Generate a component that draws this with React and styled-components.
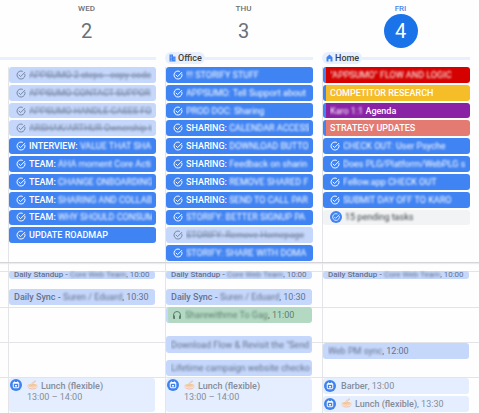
import React from "react";
import styled, { createGlobalStyle } from "styled-components";

const GlobalStyle = createGlobalStyle`
  * {
    box-sizing: border-box;
  }
  body {
    margin: 0;
    background: #fefefe;
    font-family: Roboto, "Liberation Sans", sans-serif;
    overflow-x: hidden;
  }
  button {
    font-family: inherit;
    border: none;
    margin: 0;
    cursor: pointer;
  }
`;

const HEADER = styled.header`
  display: grid;
  grid-template-columns: 8px repeat(3, minmax(0, 1fr));
  height: 52px;
`;

const DAYHEAD = styled.div`
  grid-column: ${(p) => p.$col};
  display: flex;
  flex-direction: column;
  align-items: center;
  padding-top: 3px;
`;

const DAYNAME = styled.span`
  font-size: 8px;
  line-height: 11px;
  font-weight: 500;
  color: ${(p) => (p.$today ? "#4a86e8" : "#6c7075")};
`;

const DAYNUMBER = styled.button`
  width: 34px;
  height: 34px;
  padding: 0;
  border-radius: 50%;
  font-size: 20px;
  line-height: 34px;
  background: ${(p) => (p.$today ? "#1a73e8" : "transparent")};
  color: ${(p) => (p.$today ? "#fff" : "#6c7075")};
`;

const PLACES = styled.div`
  display: grid;
  grid-template-columns: 8px repeat(3, minmax(0, 1fr));
  height: 12px;
  align-items: center;
`;

const PLACE = styled.div`
  grid-column: ${(p) => p.$span};
  display: flex;
  align-items: center;
  padding-right: 9px;
`;

const PLACELABEL = styled.button`
  display: flex;
  align-items: center;
  gap: 2px;
  height: 12px;
  padding: 0 3px 0 4px;
  border-radius: 6px;
  background: #e8f0fe;
  color: #3c4043;
  font-size: 9px;
  line-height: 12px;
  font-weight: 500;
`;

const PLACELINE = styled.div`
  flex: 1;
  height: 3px;
  background: #e8f0fe;
`;

const ALLDAY = styled.div`
  display: grid;
  grid-template-columns: 8px repeat(3, minmax(0, 1fr));
  padding-top: 3px;
  height: 199px;
  border-bottom: 1px solid #d4d5d8;
  box-shadow: 0 1px 1px #ececee;
`;

const TASKS = styled.div`
  grid-column: ${(p) => p.$col};
  display: grid;
  grid-template-rows: repeat(11, 1fr);
  gap: 2px;
  padding: 0 9px 1px 0;
  border-left: 1px solid #e4e5e8;
`;

const kinds = {
  task: ["#4083f2", "#fff"],
  done: ["#c5d7fb", "#75849f"],
  pending: ["#f1f3f4", "#3c4043"],
  red: ["#d50000", "#fff"],
  yellow: ["#f5bd27", "#fff"],
  purple: ["#8a22a6", "#fff"],
  pink: ["#e47b73", "#fff"],
};

const TASK = styled.button`
  display: flex;
  align-items: center;
  gap: 3px;
  min-width: 0;
  padding: 0 4px 0 ${(p) => (p.$bar ? 4 : 7)}px;
  border-radius: 3px;
  background: ${(p) => kinds[p.$kind][0]};
  color: ${(p) => kinds[p.$kind][1]};
  font-size: 9px;
  line-height: 14px;
  font-weight: 500;
  text-align: left;
  && {
    border-left: ${(p) => (p.$bar ? "3px solid #4083f2" : "none")};
  }
`;

const LABEL = styled.span`
  flex: 1;
  min-width: 0;
  overflow: ${(p) => (p.$open ? "visible" : "hidden")};
  white-space: nowrap;
  text-decoration: ${(p) => (p.$strike ? "line-through" : "none")};
`;

const HIDDEN = styled.span`
  display: inline-block;
  font-weight: 400;
  filter: blur(1px);
  text-decoration: inherit;
`;

const HOURS = styled.main`
  display: grid;
  grid-template-columns: 8px repeat(3, minmax(0, 1fr));
  grid-template-rows: repeat(150, 1px);
`;

const HOURLINE = styled.div`
  grid-column: 1 / -1;
  grid-row: ${(p) => p.$at};
  background: #e3e4e7;
`;

const DAYLINE = styled.div`
  grid-column: ${(p) => p.$col};
  grid-row: 1 / -1;
  border-left: 1px solid #e4e5e8;
`;

const tones = {
  blue: { fill: "#c5d7fb", ink: "#65728d", left: 5 },
  green: { fill: "#b3d9c3", ink: "#5f7f6e", left: 4 },
  pale: { fill: "#e4eefe", ink: "#868c99", left: 1 },
};

const EVENT = styled.button`
  grid-column: ${(p) => p.$col};
  grid-row: ${(p) => p.$start} / span ${(p) => p.$size};
  display: flex;
  align-items: ${(p) => (p.$tall ? "flex-start" : "center")};
  gap: ${(p) => (p.$tone === "pale" ? 5 : 3)}px;
  min-width: 0;
  padding: ${(p) => (p.$tall ? 1 : 0)}px 0 0 ${(p) => tones[p.$tone].left}px;
  border-radius: 3px;
  background: ${(p) => tones[p.$tone].fill};
  color: ${(p) => tones[p.$tone].ink};
  font-size: ${(p) => (p.$size < 10 ? 8 : 9)}px;
  line-height: ${(p) => (p.$size < 10 ? 8 : 14)}px;
  font-weight: 500;
  text-align: left;
  && {
    margin: 0 10px 0 1px;
    border-left: ${(p) => (p.$tone === "green" ? "2px solid #c5d7fb" : "none")};
  }
`;

const TIME = styled.span`
  font-weight: 400;
`;

const TIMELINE = styled.div`
  font-weight: 400;
  line-height: 9px;
`;

function CheckIcon({ badge }) {
  return (
    <svg
      width={badge ? 12 : 10}
      height={badge ? 12 : 10}
      viewBox="0 0 20 20"
      fill="none"
      style={{ flex: "none" }}
    >
      {badge && <circle cx="10" cy="10" r="10" fill="#4083f2" />}
      <g
        stroke={badge ? "#fff" : "currentColor"}
        strokeWidth="1.9"
        transform={badge ? "translate(3 3) scale(.7)" : undefined}
      >
        <path d="M17.6 7.500A8 8 0 1 1 13.6 2.9" />
        <path d="M5.6 9.6l3.6 3.6L18 4.2" />
      </g>
    </svg>
  );
}

function OfficeIcon() {
  return (
    <svg width="7" height="8" viewBox="0 0 14 16">
      <path d="M1 1h7v4h5v10H1z" fill="#4083f2" />
      <path d="M3 4h3M3 7h3M3 10h3M3 13h3M9 8h2M9 11h2" stroke="#c5d7fb" />
    </svg>
  );
}

function HomeIcon() {
  return (
    <svg width="7" height="8" viewBox="0 0 14 16">
      <path d="M7 1l6 5.500V15H9v-5H5v5H1V6.500z" fill="#4083f2" />
    </svg>
  );
}

function CalendarBadge() {
  return (
    <svg width="12" height="12" viewBox="0 0 24 24" style={{ flex: "none" }}>
      <circle cx="12" cy="12" r="12" fill="#3f82ee" />
      <rect x="6.500" y="7" width="11" height="10.500" rx="1.500" fill="none" stroke="#fff" strokeWidth="2" />
      <path d="M6 8.500h12M9 5v3M15 5v3" stroke="#fff" strokeWidth="2" />
      <path d="M10 12h4v3h-4z" fill="#fff" />
    </svg>
  );
}

function HeadphonesIcon() {
  return (
    <svg width="10" height="10" viewBox="0 0 20 20" style={{ flex: "none" }}>
      <path d="M3 15v-5a7 7 0 0 1 14 0v5" fill="none" stroke="#5f7f6e" strokeWidth="2" />
      <path d="M2 11h4v7H4a2 2 0 0 1-2-2zM14 11h4v5a2 2 0 0 1-2 2h-2z" fill="#5f7f6e" />
    </svg>
  );
}

const BOWL = styled.svg`
  width: 11px;
  height: 10px;
  margin-right: 3px;
  vertical-align: -1px;
`;

function Bowl() {
  return (
    <BOWL viewBox="0 0 22 20">
      <path d="M10 9L18 2M9 7l8-6" stroke="#eab8a0" strokeWidth="1.300" />
      <ellipse cx="11" cy="11" rx="10" ry="3.500" fill="#f5d3ac" />
      <path d="M1 11c0 5 4 8 10 8s10-3 10-8c-3 4-17 4-20 0z" fill="#f0bfb4" />
      <path d="M2 13c4 4 14 4 18 0" stroke="#fff3ea" strokeWidth="1.500" fill="none" />
      <path d="M5 11c2-3 4 1 6-1s4 1 6 0" stroke="#dfa878" fill="none" />
    </BOWL>
  );
}

const days = [
  { name: "WED", number: 2 },
  { name: "THU", number: 3 },
  { name: "FRI", number: 4, today: true },
];

const tasks = [
  [
    { kind: "done", hidden: "APPSUMO 2 steps - copy code" },
    { kind: "done", hidden: "APPSUMO CONTACT SUPPOR" },
    { kind: "done", hidden: "APPSUMO HANDLE CASES FO" },
    { kind: "done", hidden: "ARSHAK/ARTHUR Ownership t" },
    { kind: "task", text: "INTERVIEW: ", hidden: "VALUE THAT SHA" },
    { kind: "task", text: "TEAM: ", hidden: "AHA moment Core Acti" },
    { kind: "task", text: "TEAM: ", hidden: "CHANGE ONBOARDING" },
    { kind: "task", text: "TEAM: ", hidden: "SHARING AND COLLAB" },
    { kind: "task", text: "TEAM: ", hidden: "WHY SHOULD CONSUM" },
    { kind: "task", text: "UPDATE ROADMAP" },
  ],
  [
    { kind: "task", hidden: "!!! STORIFY STUFF" },
    { kind: "task", hidden: "APPSUMO: Tell Support about" },
    { kind: "task", hidden: "PROD DOC: Sharing" },
    { kind: "task", text: "SHARING: ", hidden: "CALENDAR ACCESS" },
    { kind: "task", text: "SHARING: ", hidden: "DOWNLOAD BUTTO" },
    { kind: "task", text: "SHARING: ", hidden: "Feedback on sharin" },
    { kind: "task", text: "SHARING: ", hidden: "REMOVE SHARED F" },
    { kind: "task", text: "SHARING: ", hidden: "SEND TO CALL PAR" },
    { kind: "task", hidden: "STORIFY: BETTER SIGNUP PA" },
    { kind: "done", hidden: "STORIFY: Remove Homepage" },
    { kind: "task", hidden: "STORIFY: SHARE WITH DOMA" },
  ],
  [
    { kind: "red", bar: true, hidden: "\"APPSUMO\" FLOW AND LOGIC" },
    { kind: "yellow", bar: true, text: "COMPETITOR RESEARCH" },
    { kind: "purple", bar: true, hidden: "Karo 1:1", after: " Agenda" },
    { kind: "pink", bar: true, text: "STRATEGY UPDATES" },
    { kind: "task", hidden: "CHECK OUT: User Psyche" },
    { kind: "task", hidden: "Does PLG/Platform/WebPLG s" },
    { kind: "task", hidden: "Fellow.app CHECK OUT" },
    { kind: "task", hidden: "SUBMIT DAY OFF TO KARO" },
    { kind: "pending", hidden: "15 pending tasks" },
  ],
];

// start and size are rows of the hour grid
const events = [
  { col: 2, start: 9, size: 8, text: "Daily Standup - ", hidden: "Core Web Team", time: ", 10:00" },
  { col: 2, start: 27, size: 16, text: "Daily Sync - ", hidden: "Suren / Eduard", time: ", 10:30" },
  { col: 2, start: 116, size: 34, tone: "pale", lunch: true, text: "Lunch (flexible)", range: "13:00 – 14:00" },
  { col: 3, start: 9, size: 8, text: "Daily Standup - ", hidden: "Core Web Team", time: ", 10:00" },
  { col: 3, start: 27, size: 16, text: "Daily Sync - ", hidden: "Suren / Eduard", time: ", 10:30" },
  { col: 3, start: 45, size: 16, tone: "green", hidden: "Sharewithme To Gag", time: ", 11:00" },
  { col: 3, start: 74, size: 17, hidden: "Download Flow & Revisit the \"Send" },
  { col: 3, start: 98, size: 16, hidden: "Lifetime campaign website checko" },
  { col: 3, start: 116, size: 34, tone: "pale", lunch: true, text: "Lunch (flexible)", range: "13:00 – 14:00" },
  { col: 4, start: 9, size: 8, text: "Daily Standup - ", hidden: "Core Web Team", time: ", 10:00" },
  { col: 4, start: 81, size: 16, hidden: "Web PM sync", time: ", 12:00" },
  { col: 4, start: 116, size: 16, tone: "pale", text: "Barber", time: ", 13:00" },
  { col: 4, start: 134, size: 16, tone: "pale", lunch: true, text: "Lunch (flexible)", time: ", 13:30" },
];

function Task({ kind, bar, text, hidden, after }) {
  return (
    <TASK $kind={kind} $bar={bar}>
      {!bar && <CheckIcon badge={kind === "pending"} />}
      <LABEL $strike={kind === "done"}>
        {text}
        {hidden && <HIDDEN>{hidden}</HIDDEN>}
        {after}
      </LABEL>
    </TASK>
  );
}

function Event({ col, start, size, tone = "blue", lunch, text, hidden, time, range }) {
  return (
    <EVENT $col={col} $start={start} $size={size} $tone={tone} $tall={!!range}>
      {tone === "pale" && <CalendarBadge />}
      {tone === "green" && <HeadphonesIcon />}
      <LABEL $open={size < 10}>
        {lunch && <Bowl />}
        {text}
        {hidden && <HIDDEN>{hidden}</HIDDEN>}
        {time && <TIME>{time}</TIME>}
        {range && <TIMELINE>{range}</TIMELINE>}
      </LABEL>
    </EVENT>
  );
}

function App() {
  return (
    <>
      <GlobalStyle />
      <HEADER>
        {days.map((day, i) => (
          <DAYHEAD key={day.name} $col={i + 2}>
            <DAYNAME $today={day.today}>{day.name}</DAYNAME>
            <DAYNUMBER $today={day.today}>{day.number}</DAYNUMBER>
          </DAYHEAD>
        ))}
      </HEADER>
      <PLACES>
        <PLACE $span='1 / 3'>
          <PLACELINE />
        </PLACE>
        <PLACE $span='3'>
          <PLACELABEL>
            <OfficeIcon />
            Office
          </PLACELABEL>
          <PLACELINE />
        </PLACE>
        <PLACE $span='4'>
          <PLACELABEL>
            <HomeIcon />
            Home
          </PLACELABEL>
          <PLACELINE />
        </PLACE>
      </PLACES>
      <ALLDAY>
        {tasks.map((list, i) => (
          <TASKS key={i} $col={i + 2}>
            {list.map((task, n) => (
              <Task key={n} {...task} />
            ))}
          </TASKS>
        ))}
      </ALLDAY>
      <HOURS>
        {[9, 45, 80, 115].map((at) => (
          <HOURLINE key={at} $at={at} />
        ))}
        {[2, 3, 4].map((col) => (
          <DAYLINE key={col} $col={col} />
        ))}
        {events.map((event, i) => (
          <Event key={i} {...event} />
        ))}
      </HOURS>
    </>
  );
}

export default App;
